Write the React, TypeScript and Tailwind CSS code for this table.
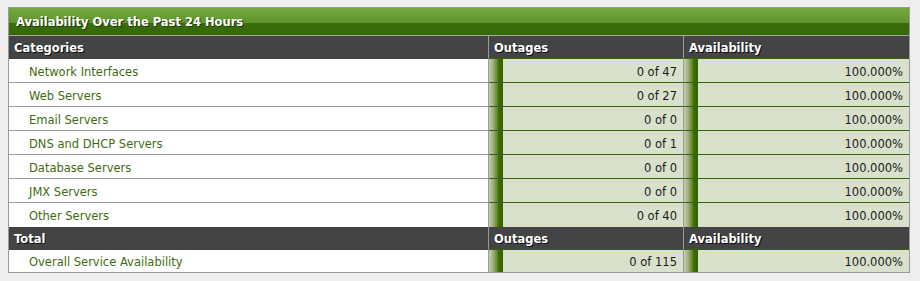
import React from "react";

type Row = { name: string; outages: string; availability: string };

const rows: Row[] = [
  { name: "Network Interfaces", outages: "0 of 47", availability: "100.000%" },
  { name: "Web Servers", outages: "0 of 27", availability: "100.000%" },
  { name: "Email Servers", outages: "0 of 0", availability: "100.000%" },
  { name: "DNS and DHCP Servers", outages: "0 of 1", availability: "100.000%" },
  { name: "Database Servers", outages: "0 of 0", availability: "100.000%" },
  { name: "JMX Servers", outages: "0 of 0", availability: "100.000%" },
  { name: "Other Servers", outages: "0 of 40", availability: "100.000%" },
];

const font = { fontFamily: '"DejaVu Sans", Verdana, sans-serif' };

function HeaderRow({ label }: { label: string }) {
  const cell =
    "flex h-[23px] items-center bg-[#444444] pl-[5px] pt-[3px] text-[11.5px] font-bold text-white [text-shadow:1px_1px_0_#111]";
  return (
    <>
      <div className={`${cell} border-r border-r-[#9a9a9a] border-b border-b-[#444444]`}>{label}</div>
      <div className={`${cell} border-r border-r-[#9a9a9a] border-b border-b-[#336600]`}>Outages</div>
      <div className={`${cell} border-b border-b-[#336600]`}>Availability</div>
    </>
  );
}

function ValueCell({ value, last, divider }: { value: string; last: boolean; divider: boolean }) {
  return (
    <div
      className={`flex h-full items-stretch bg-[#d9e1cc] ${
        last ? "" : "border-b border-b-[#336600]"
      } ${divider ? "border-r border-r-[#9a9a9a]" : ""}`}
    >
      <div className="w-[14px] shrink-0 bg-[linear-gradient(to_right,#c9cfb3_0%,#9fae7c_30%,#5f8226_60%,#3a6b00_70%,#336600_100%)]" />
      <div className="flex flex-1 items-center justify-end pr-[6px] pt-[4px] text-[11.5px] text-[#1a1a1a]">
        {value}
      </div>
    </div>
  );
}

function DataRow({ row, last, height }: { row: Row; last: boolean; height: string }) {
  return (
    <>
      <div
        className={`flex ${height} items-center border-r border-r-[#9a9a9a] bg-white pl-[20px] pt-[4px] text-[11.5px] text-[#3f6b10] ${
          last ? "" : "border-b border-b-[#a0a0a0]"
        }`}
      >
        {row.name}
      </div>
      <ValueCell value={row.outages} last={last} divider />
      <ValueCell value={row.availability} last={last} divider={false} />
    </>
  );
}

export default function App() {
  return (
    <div className="h-[281px] w-[920px] bg-[#eeeeee] pl-[8px] pt-[7px]" style={font}>
      <div className="w-[902px] border border-[#9a9a9a] bg-white">
        <div className="flex h-[28px] items-center border-b border-b-[#a6a6a6] bg-[linear-gradient(to_bottom,#74a83e_0%,#5f932d_55%,#3a6c0a_56%,#356806_100%)] pl-[7px] pt-[2px] text-[11.5px] font-bold text-white [text-shadow:1px_1px_0_#1f3a05]">
          Availability Over the Past 24 Hours
        </div>
        <div className="grid grid-cols-[480px_195px_225px]">
          <HeaderRow label="Categories" />
          {rows.map((r, i) => (
            <DataRow key={r.name} row={r} last={i === rows.length - 1} height="h-[24px]" />
          ))}
          <HeaderRow label="Total" />
          <DataRow
            row={{ name: "Overall Service Availability", outages: "0 of 115", availability: "100.000%" }}
            last
            height="h-[22px]"
          />
        </div>
      </div>
    </div>
  );
}
